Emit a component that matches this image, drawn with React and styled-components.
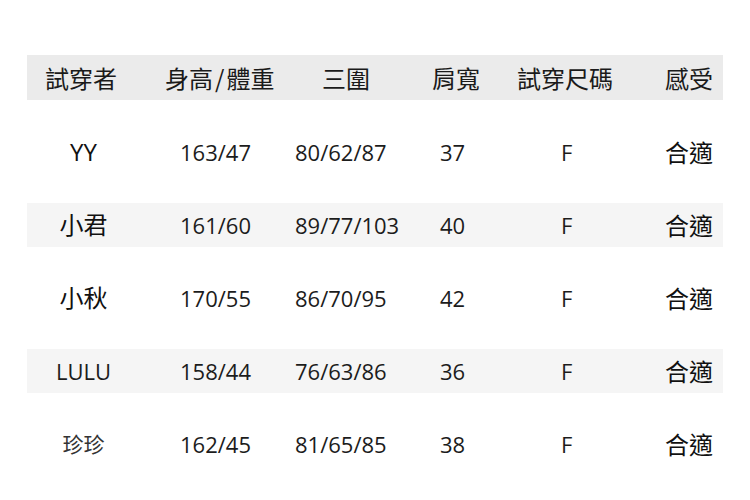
import React from "react";
import styled, { createGlobalStyle } from "styled-components";

const Global = createGlobalStyle`
  html, body { margin: 0; padding: 0; background: #ffffff; }
  body { font-family: "Open Sans", "Noto Sans CJK TC", sans-serif; color: #1c1c1c; }
`;

const COLS = [
  { w: 133, head: 18, data: 0 },
  { w: 130, head: 5, data: 20 },
  { w: 135, head: 32, data: 5 },
  { w: 80, head: 7, data: 15 },
  { w: 135, head: 12, data: 56 },
  { w: 83, head: 25, data: 25 },
];
const template = COLS.map((c) => `${c.w}px`).join(" ");

const Table = styled.div`
  margin: 55px 0 0 27px;
  width: 696px;
  display: flex;
  flex-direction: column;
  gap: 29px;
`;

const HeadRow = styled.div`
  display: grid;
  grid-template-columns: ${template};
  height: 45px;
  align-items: center;
  background: #ebebeb;
  margin-bottom: 1px;
`;

const HeadCell = styled.div`
  padding-left: ${(p) => p.$pad}px;
  font-family: "Noto Sans CJK TC", sans-serif;
  font-size: 24px;
  line-height: 1;
  color: #1a1a1a;
  white-space: nowrap;
`;

const Slash = styled.span`
  display: inline-block;
  margin: 0 2px;
`;

const Row = styled.div`
  display: grid;
  grid-template-columns: ${template};
  height: 44px;
  align-items: center;
  background: ${(p) => (p.$striped ? "#f5f5f5" : "transparent")};
`;

const Cell = styled.div`
  padding-left: ${(p) => p.$pad}px;
  font-family: "Open Sans", "Noto Sans CJK TC", sans-serif;
  font-size: 22px;
  line-height: 1;
  color: #1c1c1c;
  white-space: nowrap;
`;

const NameCell = styled.div`
  padding-right: 20px;
  text-align: center;
  font-family: "Open Sans", "Noto Sans CJK TC", sans-serif;
  font-size: ${(p) => p.$size}px;
  font-weight: 400;
  color: ${(p) => p.$color};
  line-height: 1;
  white-space: nowrap;
`;

const FeelCell = styled.div`
  padding-left: ${(p) => p.$pad}px;
  font-family: "Noto Sans CJK TC", sans-serif;
  font-size: 24px;
  font-weight: 400;
  line-height: 1;
  color: #111;
  white-space: nowrap;
`;

const headers = ["試穿者", "身高/體重", "三圍", "肩寬", "試穿尺碼", "感受"];

const rows = [
  { name: "YY", size: 24, color: "#111", hw: "163/47", bust: "80/62/87", sh: "37" },
  { name: "小君", size: 24, color: "#111", hw: "161/60", bust: "89/77/103", sh: "40" },
  { name: "小秋", size: 24, color: "#111", hw: "170/55", bust: "86/70/95", sh: "42" },
  { name: "LULU", size: 22, color: "#1c1c1c", hw: "158/44", bust: "76/63/86", sh: "36" },
  { name: "珍珍", size: 21, color: "#333", hw: "162/45", bust: "81/65/85", sh: "38" },
];

export default function App() {
  return (
    <>
      <Global />
      <Table>
        <HeadRow>
          {headers.map((h, i) => (
            <HeadCell key={h} $pad={COLS[i].head}>
              {h.includes("/") ? (
                <>
                  {h.split("/")[0]}
                  <Slash>/</Slash>
                  {h.split("/")[1]}
                </>
              ) : (
                h
              )}
            </HeadCell>
          ))}
        </HeadRow>
        {rows.map((r, i) => (
          <Row key={r.name} $striped={i % 2 === 1}>
            <NameCell $size={r.size} $color={r.color}>
              {r.name}
            </NameCell>
            <Cell $pad={COLS[1].data}>{r.hw}</Cell>
            <Cell $pad={COLS[2].data}>{r.bust}</Cell>
            <Cell $pad={COLS[3].data}>{r.sh}</Cell>
            <Cell $pad={COLS[4].data}>F</Cell>
            <FeelCell $pad={COLS[5].data}>合適</FeelCell>
          </Row>
        ))}
      </Table>
    </>
  );
}
